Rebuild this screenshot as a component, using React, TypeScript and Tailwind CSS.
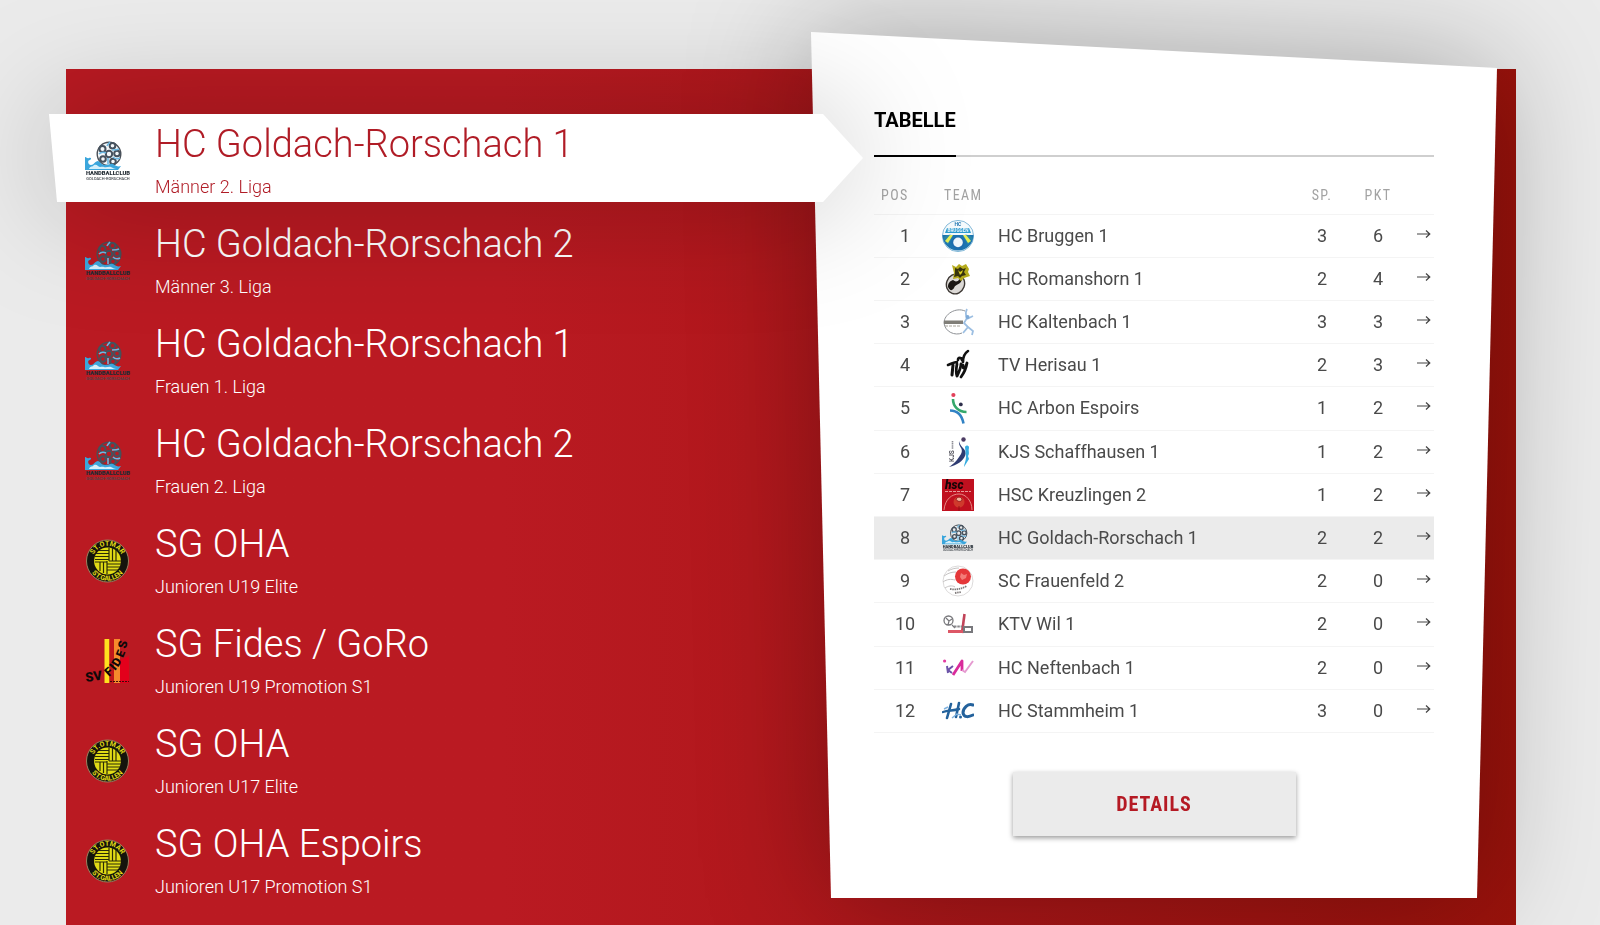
import React, { useState } from 'react';
import clsx from 'clsx';

interface Squad {
  id: string;
  name: string;
  league: string;
  logo: 'goldach' | 'otmar' | 'fides';
}

interface Standing {
  team: string;
  played: number;
  points: number;
  logo: React.ReactNode;
  own?: boolean;
}

const GoldachLogo: React.FC<{ ball?: string; className?: string }> = ({ ball = 'none', className }) => (
  <svg viewBox="0 0 46 40" className={className} aria-hidden="true">
    <circle cx="24" cy="13" r="11.8" fill={ball} stroke="#4a4f56" strokeWidth="1.4" />
    <g fill="none" stroke="#46525e" strokeWidth="2">
      <circle cx="24" cy="13" r="3.2" />
      <circle cx="17.5" cy="8" r="3" />
      <circle cx="27.5" cy="4.8" r="2.8" />
      <circle cx="32" cy="12.5" r="2.8" />
      <circle cx="28" cy="20.5" r="2.8" />
      <circle cx="18" cy="18" r="2.8" />
    </g>
    <g fill="none" stroke="#6db8e2" strokeWidth="1.6">
      <path d="M14 13c2-2 5-2 7-1M27 9c3 0 5 0 7-1M28 16c2 2 5 2 7 1M22 5c1-2 2-3 3-4M23 17v6" />
    </g>
    <path d="M0 29V16c2 0 2 2 4 1s3 1 1 2c-3 0-2 5 1 5s4-4 7-4c3 1 3 4 7 4s5-2 8-1c3 2 5 3 8 2l-3 4z" fill="#3ba6dc" />
    <path d="M4 28c1-3 3-2 4-3s3-2 5 0 4 0 6 1 5-1 7 0 4 2 5 2z" fill="#d5effa" />
    <text x="23" y="34.2" textAnchor="middle" fontSize="5.8" className="font-['Roboto',sans-serif] font-black" fill="#222b33">
      HANDBALLCLUB
    </text>
    <text x="23" y="38.6" textAnchor="middle" fontSize="4" className="font-['Roboto',sans-serif] font-medium" fill="#444a50">
      GOLDACH-RORSCHACH
    </text>
  </svg>
);

const OtmarLogo = () => (
  <svg viewBox="0 0 46 46" className="size-[46px]" aria-hidden="true">
    <defs>
      <path id="otmar-top" d="M7.3 23a15.2 15.2 0 0 1 30.4 0" />
      <path id="otmar-bottom" d="M2.8 23a19.7 19.7 0 0 0 39.4 0" />
    </defs>
    <circle cx="22.5" cy="23" r="21" fill="#14140c" stroke="#9a8260" strokeWidth="1" />
    <circle cx="22.5" cy="23" r="13.4" fill="#e0db16" />
    <g stroke="#2b2a08" strokeWidth="1.2" fill="none">
      <path d="M11 15.5h13M10 18.5h14M10 21.5h14M24 10v13M27.5 10v13M31 12v11M24 23h12M22 26h14M22 29h13M22 32h11M22 23v13M18.5 24v11M15 24v9M10 24h12M14 12.5h10" />
    </g>
    <g fontSize="7" fill="#e0db16" className="font-['Roboto',sans-serif] font-bold">
      <text><textPath href="#otmar-top" startOffset="50%" textAnchor="middle">ST.OTMAR</textPath></text>
      <text><textPath href="#otmar-bottom" startOffset="50%" textAnchor="middle">ST.GALLEN</textPath></text>
    </g>
  </svg>
);

const FidesLogo = () => (
  <svg viewBox="0 0 46 46" className="size-[46px] overflow-visible" aria-hidden="true">
    <path d="M19.5 1h5v44h-5z" fill="#ffe11f" />
    <path d="M24.5 1h4.5v44h-4.5z" fill="#c0161a" />
    <path d="M29 1h6v44h-6z" fill="#f58a2c" />
    <path d="M35 22l9-4v27h-9z" fill="#e3001b" />
    <g fill="#0d0808" className="font-['Roboto',sans-serif] font-black">
      <text x="1" y="44" fontSize="13" transform="rotate(-8 1 44)">SV</text>
      <text x="24" y="39" fontSize="12" transform="rotate(-42 24 39)">F</text>
      <text x="30" y="33" fontSize="12" transform="rotate(-50 30 33)">I</text>
      <text x="33" y="29.5" fontSize="12" transform="rotate(-58 33 29.5)">D</text>
      <text x="38" y="20" fontSize="11.5" transform="rotate(-68 38 20)">E</text>
      <text x="41" y="11" fontSize="12" transform="rotate(-78 41 11)">S</text>
    </g>
    <path d="M25 43.5h19" stroke="#3c0a0a" strokeWidth="1" strokeDasharray="2 1" />
  </svg>
);

const BruggenLogo = () => (
  <svg viewBox="0 0 32 32" className="size-8" aria-hidden="true">
    <circle cx="16" cy="16" r="15.6" fill="#f4fafc" stroke="#6aa9cf" strokeWidth=".8" />
    <path d="M.5 15h31a15.5 15.5 0 0 1-31 0z" fill="#1c74b0" />
    <path d="M5 8h22l2 5H3z" fill="#2c9bd0" />
    <path d="M1 18c4-4 8-4 10-2l-5 9z" fill="#2c86a8" />
    <path d="M31 18c-4-4-8-4-10-2l5 9z" fill="#2c86a8" />
    <path d="M8 15h3L6 23l-3-2zM24 15h-3l5 8 3-2z" fill="#e4ed56" />
    <circle cx="16" cy="23" r="6.4" fill="#1d6cae" />
    <circle cx="16" cy="22.4" r="4.8" fill="#eef5fb" />
    <text x="16" y="6.4" textAnchor="middle" fontSize="5" fill="#1c74b0" className="font-['Roboto',sans-serif] font-bold">HC</text>
    <text x="16" y="12.2" textAnchor="middle" fontSize="4.6" fill="#e6f5fb" className="font-['Roboto',sans-serif] font-bold">BRUGGEN</text>
  </svg>
);

const RomanshornLogo = () => (
  <svg viewBox="0 0 32 32" className="size-8" aria-hidden="true">
    <ellipse cx="13.5" cy="21" rx="9" ry="10" fill="#dcd9d6" stroke="#3d3834" strokeWidth="1.4" transform="rotate(20 13.5 21)" />
    <path d="M6 24c0-4 2-6 5-7 2 1 2 2 5 1l3-4c2 1 1 4-1 6-3 2-5 2-6 5-2 3-4 3-6-1z" fill="#1c1815" />
    <path d="M10 2l4 2 3-3 3 2 4-2 3 5-1 3 2 4-6 2-3 3-3-3-5 1 1-6z" fill="#b5ab1d" />
    <path d="M13 5l3 1 2-2 3 2 3-1-2 4 2 3-4 1-2 2-2-2-4 1 1-4z" fill="#37330e" />
    <path d="M16 7l2 2 3-2-1 3-2 2z" fill="#d9cf24" />
  </svg>
);

const KaltenbachLogo = () => (
  <svg viewBox="0 0 32 32" className="size-8" aria-hidden="true">
    <path d="M23 5C14 1 2 8 2 17c1 9 11 13 18 10" fill="none" stroke="#8f9296" strokeWidth="1" />
    <path d="M25 3c-2 4-1 7 0 9l-3 5 4 4-5 6M25 13l6-3M26 21l5 4-1 4" fill="none" stroke="#9dbfe2" strokeWidth="1.8" />
    <circle cx="25.5" cy="11" r="2" fill="#7fabd8" />
    <path d="M2 14.5h19v3.6H2z" fill="#807e78" />
    <path d="M3 20h15" stroke="#aaa69c" strokeWidth="1.2" strokeDasharray="3 1" />
  </svg>
);

const HerisauLogo = () => (
  <svg viewBox="0 0 32 32" className="size-8" aria-hidden="true">
    <g fill="none" stroke="#111" strokeLinecap="round" strokeLinejoin="round">
      <path d="M6 16c3-1 6-3 9-3" strokeWidth="2.6" />
      <path d="M11 16l-1 10" strokeWidth="3" />
      <path d="M15 15c-1 5-1 9 0 12 2-4 4-8 4-12" strokeWidth="2.8" />
      <path d="M16 11c0-3 3-3 4 0M18 9c2 0 3 2 3 4 0-5 2-9 5-11" strokeWidth="2.6" />
      <path d="M21 16c-1 4 2 5 4-2-1 6-3 10-6 14" strokeWidth="2.8" />
    </g>
  </svg>
);

const ArbonLogo = () => (
  <svg viewBox="0 0 32 32" className="size-8" aria-hidden="true">
    <circle cx="11.4" cy="3" r="2.1" fill="#e2415a" />
    <circle cx="18.8" cy="12.4" r="1.9" fill="#2e2f4b" />
    <path d="M11 7c0 7 5 13 13.500 13" fill="none" stroke="#35a86b" strokeWidth="2.6" />
    <path d="M8 18.5c8 0 12 5 13.500 13" fill="none" stroke="#3182c4" strokeWidth="2.6" />
  </svg>
);

const SchaffhausenLogo = () => (
  <svg viewBox="0 0 32 32" className="size-8" aria-hidden="true">
    <circle cx="21.5" cy="3.5" r="2.2" fill="#4c3b63" />
    <path d="M17 5c-1 6 5 7 2 13-3 5-6 9-12 13 8-2 14-6 16-11 3-7-5-8-6-15z" fill="#2f3c73" />
    <path d="M23 11a2 2 0 1 1 4 1c-1 3 1 5-1 8l1 3-5 8c0-3 2-6 2-10z" fill="#38ade0" />
    <text x="12" y="26" fontSize="6.5" transform="rotate(-90 12 26)" fill="#55555e" className="font-['Roboto',sans-serif] font-bold">KJS</text>
    <path d="M10.5 5v8" stroke="#8c8c94" strokeWidth="1.6" strokeDasharray="1.5 .6" />
  </svg>
);

const KreuzlingenLogo = () => (
  <svg viewBox="0 0 32 32" className="size-8" aria-hidden="true">
    <path d="M0 0h32v32H0z" fill="#c0101f" />
    <path d="M2 31C3 20 10 15 17 15s13 7 13 16" fill="none" stroke="#e58a84" strokeWidth="1" />
    <circle cx="17" cy="23" r="5.5" fill="#cf3a2c" />
    <path d="M14 20c2-3 6-2 6 1-1 2-5 2-6-1zM17 27v5" fill="#f3b49b" stroke="#8b0c13" strokeWidth=".8" />
    <text x="3" y="10" fontSize="12" fill="#170406" className="font-['Roboto',sans-serif] font-black italic">hsc</text>
    <path d="M3 12.5h26" stroke="#e79a98" strokeWidth="1" strokeDasharray="3 1" />
  </svg>
);

const FrauenfeldLogo = () => (
  <svg viewBox="0 0 32 32" className="size-8" aria-hidden="true">
    <circle cx="16" cy="16" r="15" fill="#fff" stroke="#d3d0d0" strokeWidth=".8" />
    <path d="M2 11c4-3 8-4 12-4M1 17c4-3 8-3 12-2M3 23c3-2 7-3 10-1M6 6c3-2 7-3 11-3" fill="none" stroke="#c6c3c3" strokeWidth="1" />
    <circle cx="21" cy="11.5" r="8" fill="#e5383a" />
    <path d="M19 8l3 2 3-1-1 4-4 2-2-3z" fill="#f37d78" />
    <path d="M8 24c6 1 11 0 17-3M13 28l6-1" fill="none" stroke="#807b7b" strokeWidth="1.8" strokeDasharray="1.5 .7" />
  </svg>
);

const WilLogo = () => (
  <svg viewBox="0 0 32 32" className="size-8" aria-hidden="true">
    <circle cx="6.5" cy="12.5" r="4.5" fill="none" stroke="#77777b" strokeWidth="1.3" />
    <path d="M4 10l3 3 3-2M7 13l-1 4M10 17l3 3" fill="none" stroke="#77777b" strokeWidth="1.2" />
    <path d="M22.5 6l-2.500 19" stroke="#c14459" strokeWidth="2.6" />
    <path d="M6 23.5h16" stroke="#dd5766" strokeWidth="3" />
    <path d="M12 18.5h8" stroke="#88888c" strokeWidth="2" strokeDasharray="2.5 .8" />
    <path d="M22 19h8v5h-8z" fill="none" stroke="#78787c" strokeWidth="2" />
  </svg>
);

const NeftenbachLogo = () => (
  <svg viewBox="0 0 32 32" className="size-8" aria-hidden="true">
    <circle cx="2.6" cy="9" r="1.6" fill="#e43aa0" />
    <path d="M5 14l1 7M11 14l-5 4 4 3" fill="none" stroke="#6c54a8" strokeWidth="2" />
    <path d="M11 23l9-14v10" fill="none" stroke="#d92b9b" strokeWidth="2.8" strokeLinejoin="round" />
    <path d="M20 18l3 2 8-11" fill="none" stroke="#e59ad0" strokeWidth="2" />
  </svg>
);

const StammheimLogo = () => (
  <svg viewBox="0 0 32 32" className="size-8" aria-hidden="true">
    <g fill="none" stroke="#24629c" strokeLinecap="round">
      <path d="M9 9L5 23M17 8l-3 14" strokeWidth="2.6" />
      <path d="M1 17c5-2 10-1 16-3" strokeWidth="2.4" />
      <path d="M31 10c-5-2-10 3-10 8 1 5 6 4 10 2" strokeWidth="3" />
    </g>
    <circle cx="18.5" cy="22" r="1.5" fill="#24629c" />
    <path d="M10 23l5-4 4 1M2 14l4-2" stroke="#7fb2df" strokeWidth="1.4" fill="none" />
  </svg>
);

const squads: Squad[] = [
  { id: 'm2', name: 'HC Goldach-Rorschach 1', league: 'Männer 2. Liga', logo: 'goldach' },
  { id: 'm3', name: 'HC Goldach-Rorschach 2', league: 'Männer 3. Liga', logo: 'goldach' },
  { id: 'f1', name: 'HC Goldach-Rorschach 1', league: 'Frauen 1. Liga', logo: 'goldach' },
  { id: 'f2', name: 'HC Goldach-Rorschach 2', league: 'Frauen 2. Liga', logo: 'goldach' },
  { id: 'u19e', name: 'SG OHA', league: 'Junioren U19 Elite', logo: 'otmar' },
  { id: 'u19p', name: 'SG Fides / GoRo', league: 'Junioren U19 Promotion S1', logo: 'fides' },
  { id: 'u17e', name: 'SG OHA', league: 'Junioren U17 Elite', logo: 'otmar' },
  { id: 'u17p', name: 'SG OHA Espoirs', league: 'Junioren U17 Promotion S1', logo: 'otmar' },
];

const standings: Standing[] = [
  { team: 'HC Bruggen 1', played: 3, points: 6, logo: <BruggenLogo /> },
  { team: 'HC Romanshorn 1', played: 2, points: 4, logo: <RomanshornLogo /> },
  { team: 'HC Kaltenbach 1', played: 3, points: 3, logo: <KaltenbachLogo /> },
  { team: 'TV Herisau 1', played: 2, points: 3, logo: <HerisauLogo /> },
  { team: 'HC Arbon Espoirs', played: 1, points: 2, logo: <ArbonLogo /> },
  { team: 'KJS Schaffhausen 1', played: 1, points: 2, logo: <SchaffhausenLogo /> },
  { team: 'HSC Kreuzlingen 2', played: 1, points: 2, logo: <KreuzlingenLogo /> },
  { team: 'HC Goldach-Rorschach 1', played: 2, points: 2, logo: <GoldachLogo className="h-7 w-8" />, own: true },
  { team: 'SC Frauenfeld 2', played: 2, points: 0, logo: <FrauenfeldLogo /> },
  { team: 'KTV Wil 1', played: 2, points: 0, logo: <WilLogo /> },
  { team: 'HC Neftenbach 1', played: 2, points: 0, logo: <NeftenbachLogo /> },
  { team: 'HC Stammheim 1', played: 3, points: 0, logo: <StammheimLogo /> },
];

const SquadItem: React.FC<{ squad: Squad; active: boolean; onSelect: () => void }> = ({ squad, active, onSelect }) => (
  <li className={clsx(active && 'drop-shadow-[0_0_60px_rgba(0,0,0,0.25)]')}>
    <button
      type="button"
      onClick={onSelect}
      className={clsx(
        'flex w-full items-center gap-6 pt-2 pb-[3px] pl-9 text-left',
        active
          ? 'bg-white text-[#b01c26] [clip-path:polygon(0_0,calc(100%-40px)_0,100%_50%,calc(100%-40px)_100%,8px_100%)]'
          : 'text-white'
      )}
    >
      <span className="flex size-[46px] shrink-0 items-center justify-center">
        {squad.logo === 'goldach' && <GoldachLogo ball={active ? '#f4f7f9' : 'none'} className="h-10 w-[46px]" />}
        {squad.logo === 'otmar' && <OtmarLogo />}
        {squad.logo === 'fides' && <FidesLogo />}
      </span>
      <span className="flex flex-col gap-[9px] font-light">
        <span className="text-[38px] leading-[44px]">{squad.name}</span>
        <span className="text-lg leading-6">{squad.league}</span>
      </span>
    </button>
  </li>
);

const StandingsTable: React.FC = () => (
  <table className="h-[560px] w-full table-fixed border-collapse text-[#4a4a4a]">
    <colgroup>
      <col className="w-[62px]" />
      <col className="w-[62px]" />
      <col />
      <col className="w-14" />
      <col className="w-14" />
      <col className="w-7" />
    </colgroup>
    <thead>
      <tr className="h-[41px] border-b border-[#f4f4f4] font-['Roboto_Condensed','Roboto',sans-serif] text-sm tracking-widest text-[#a3a3a3]">
        <th className="pt-1 pl-[7px] text-left font-normal">POS</th>
        <th colSpan={2} className="pt-1 pl-2 text-left font-normal">TEAM</th>
        <th className="pt-1 font-normal">SP.</th>
        <th className="pt-1 font-normal">PKT</th>
        <td />
      </tr>
    </thead>
    <tbody>
      {standings.map((row, index) => (
        <tr
          key={row.team}
          className={clsx('h-[43px] border-b border-[#f4f4f4] text-lg leading-6', row.own && 'bg-[#ebebeb]')}
        >
          <td className="text-center">{index + 1}</td>
          <td className="pl-[6px]">{row.logo}</td>
          <td>{row.team}</td>
          <td className="text-center">{row.played}</td>
          <td className="text-center">{row.points}</td>
          <td className="pb-1">
            <a href="#details" aria-label={`${row.team} anzeigen`} className="flex justify-end pr-[3px]">
              <svg viewBox="0 0 14 10" className="h-[10px] w-[14px]" fill="none" stroke="#444" strokeWidth="1.2" aria-hidden="true">
                <path d="M0 5h13M9 1.500L12.800 5 9 8.500" />
              </svg>
            </a>
          </td>
        </tr>
      ))}
    </tbody>
  </table>
);

const App: React.FC = () => {
  const [activeId, setActiveId] = useState('m2');

  return (
    <main className="flex min-h-screen flex-col overflow-hidden bg-[#ebebeb] pt-[69px] pr-[84px] pl-[66px] font-['Roboto',sans-serif]">
      <section className="flex flex-1 items-start bg-linear-to-r from-[#ba1a22] from-30% to-[#9a120b]">
        <ul className="z-20 -ml-[17px] flex w-[814px] shrink-0 flex-col gap-3 pt-[45px]">
          {squads.map((squad) => (
            <SquadItem
              key={squad.id}
              squad={squad}
              active={squad.id === activeId}
              onSelect={() => setActiveId(squad.id)}
            />
          ))}
        </ul>

        <div className="z-10 -mt-[37px] mr-[19px] mb-[27px] -ml-[52px] flex-1 drop-shadow-[0_0_60px_rgba(0,0,0,0.3)]">
          <div className="bg-white px-[63px] pt-[76px] pb-[62px] [clip-path:polygon(0_0,100%_36px,calc(100%-20px)_100%,20px_100%)]">
            <div className="border-b-2 border-[#cfcfcf]">
              <button
                type="button"
                className="-mb-[2px] border-b-2 border-black pb-[23px] text-xl leading-6 font-bold text-black"
              >
                TABELLE
              </button>
            </div>
            <div className="pt-4">
              <StandingsTable />
            </div>
            <div className="flex justify-center pt-[39px]">
              <button
                type="button"
                className="h-16 w-[283px] bg-[#ebebeb] font-['Roboto_Condensed','Roboto',sans-serif] text-xl font-bold tracking-wider text-[#b51a24] shadow-[0_2px_5px_rgba(0,0,0,0.4)]"
              >
                DETAILS
              </button>
            </div>
          </div>
        </div>
      </section>
    </main>
  );
};

export default App;
